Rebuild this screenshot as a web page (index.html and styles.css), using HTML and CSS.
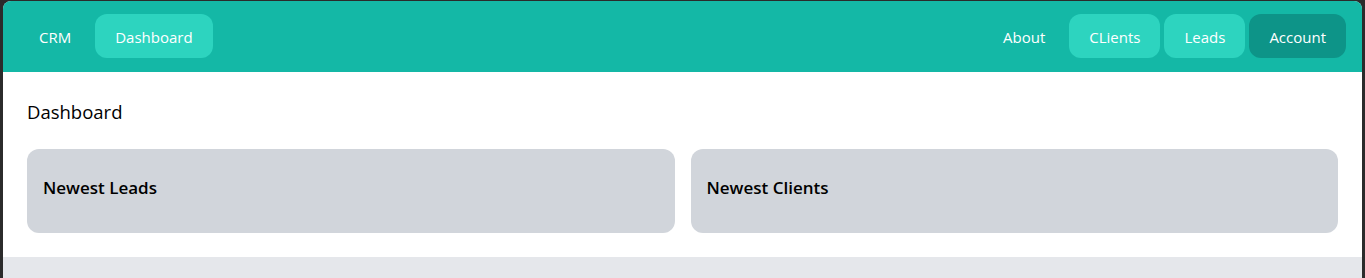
FILE: index.html
```html
<!DOCTYPE html>
<html lang="en">
<head>
<meta charset="utf-8">
<title>CRM</title>
<link rel="stylesheet" href="styles.css">
</head>
<body>
<div class="window">
  <nav class="navbar">
    <div class="nav-group">
      <a class="nav-link" href="#">CRM</a>
      <a class="nav-link nav-link--light" href="#">Dashboard</a>
    </div>
    <div class="nav-group">
      <a class="nav-link" href="#">About</a>
      <a class="nav-link nav-link--light" href="#">CLients</a>
      <a class="nav-link nav-link--light" href="#">Leads</a>
      <a class="nav-link nav-link--dark" href="#">Account</a>
    </div>
  </nav>
  <main class="main">
    <h1 class="page-title">Dashboard</h1>
    <div class="cards">
      <section class="card"><h2 class="card-title">Newest Leads</h2></section>
      <section class="card"><h2 class="card-title">Newest Clients</h2></section>
    </div>
  </main>
</div>
</body>
</html>
```

FILE: styles.css
```css
* { box-sizing: border-box; }
html, body { margin: 0; height: 100%; }
body {
  background: #2b2b2b;
  padding: 1px 3px 0 3px;
  font-family: "Open Sans", "Noto Sans", sans-serif;
}
.window {
  height: 100%;
  background: #e5e7eb;
  border-radius: 8px 8px 0 0;
  overflow: hidden;
}
.navbar {
  display: flex;
  justify-content: space-between;
  align-items: center;
  background: #14b8a6;
  padding: 13px 16px 14px 16px;
}
.nav-group { display: flex; gap: 4px; }
.nav-link {
  display: block;
  padding: 11px 20px 9px 20px;
  font-size: 15px;
  line-height: 24px;
  color: #ffffff;
  text-decoration: none;
  border-radius: 12px;
}
.nav-link--light { background: #2dd4bf; }
.nav-link--dark { background: #0d9488; }
.main {
  background: #ffffff;
  padding: 26px 24px 24px 24px;
}
.page-title {
  margin: 0 0 23px 0;
  font-size: 18.5px;
  line-height: 28px;
  font-weight: 400;
  color: #000;
}
.cards {
  display: grid;
  grid-template-columns: 1fr 1fr;
  gap: 16px;
}
.card {
  background: #d1d5db;
  border-radius: 12px;
  padding: 25px 16px 31px 16px;
}
.card-title {
  margin: 0;
  font-size: 17px;
  line-height: 28px;
  font-weight: 600;
  color: #000;
}
```
